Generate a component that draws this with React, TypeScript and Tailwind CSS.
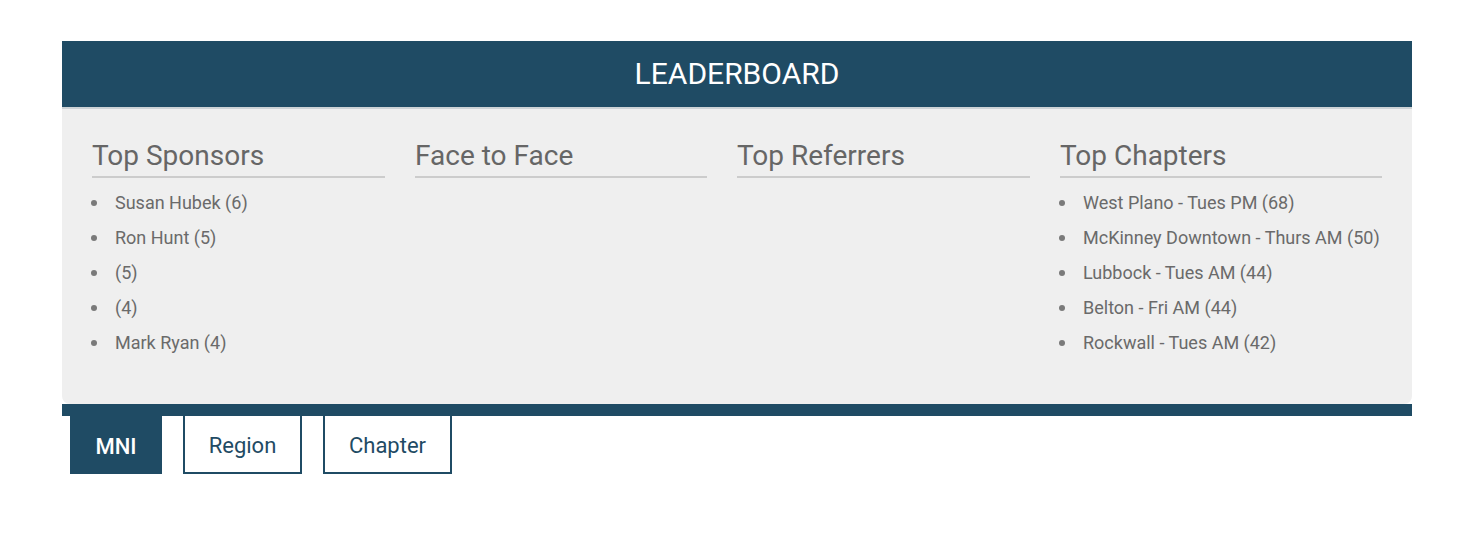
import React from "react";

const columns: { title: string; items: string[] }[] = [
  {
    title: "Top Sponsors",
    items: ["Susan Hubek (6)", "Ron Hunt (5)", "(5)", "(4)", "Mark Ryan (4)"],
  },
  { title: "Face to Face", items: [] },
  { title: "Top Referrers", items: [] },
  {
    title: "Top Chapters",
    items: [
      "West Plano - Tues PM (68)",
      "McKinney Downtown - Thurs AM (50)",
      "Lubbock - Tues AM (44)",
      "Belton - Fri AM (44)",
      "Rockwall - Tues AM (42)",
    ],
  },
];

export default function App() {
  return (
    <div
      className="w-[1476px] h-[540px] bg-white pt-[41px] pl-[62px]"
      style={{ fontFamily: "Roboto, 'Liberation Sans', sans-serif" }}
    >
      <div className="w-[1350px]">
        <div className="h-[68px] bg-[#1f4b64] border-b-2 border-[#cdd3d6] flex items-center justify-center">
          <h1 className="text-white text-[30px] leading-none">LEADERBOARD</h1>
        </div>
        <div className="bg-[#efefef] rounded-b-[8px] h-[295px] px-[30px] pt-[30px] grid grid-cols-[293px_292px_293px_322px] gap-x-[30px] items-start">
          {columns.map((c) => (
            <div key={c.title}>
              <h2 className="text-[28px] leading-[34px] text-[#666666] border-b-2 border-[#cccccc] pb-[3px]">
                {c.title}
              </h2>
              <ul className="mt-[7px]">
                {c.items.map((it, i) => (
                  <li key={i} className="flex items-center h-[35px] text-[18px] text-[#6a6a6a]">
                    <span className="w-[6px] h-[6px] rounded-full bg-[#7a7a7a] ml-[-1px] mr-[18px] shrink-0" />
                    <span>{it}</span>
                  </li>
                ))}
              </ul>
            </div>
          ))}
        </div>
        <div className="h-[12px] bg-[#1f4b64]" />
        <div className="flex pl-[8px] gap-[21px] bg-white">
          <button className="w-[92px] h-[58px] pt-[2px] bg-[#1f4b64] text-white text-[22px] font-medium">MNI</button>
          <button className="w-[119px] h-[58px] pt-[2px] border-2 border-t-0 border-[#1f4b64] text-[#1f4b64] text-[22px]">
            Region
          </button>
          <button className="w-[129px] h-[58px] pt-[2px] border-2 border-t-0 border-[#1f4b64] text-[#1f4b64] text-[22px]">
            Chapter
          </button>
        </div>
      </div>
    </div>
  );
}
